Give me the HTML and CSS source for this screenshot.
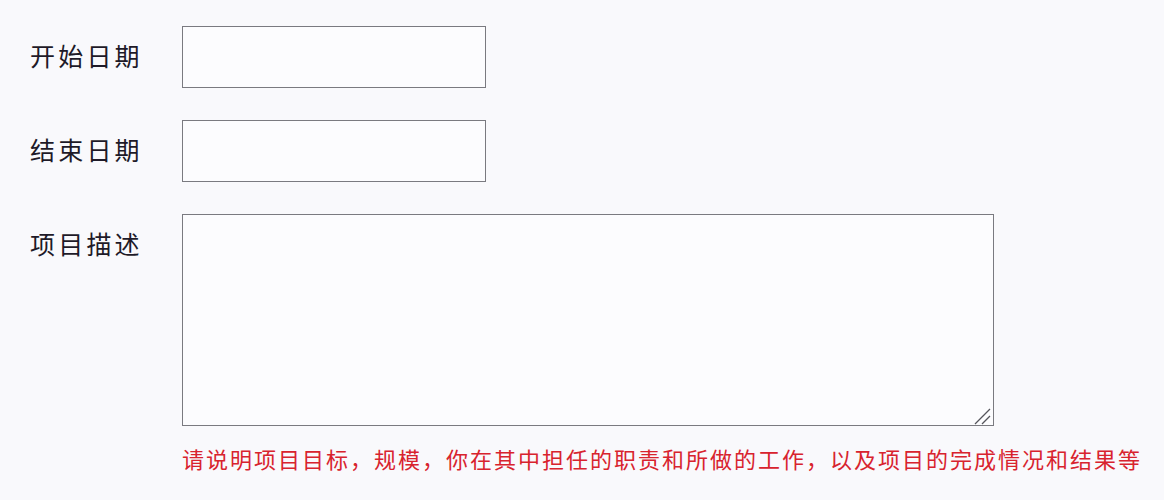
FILE: index.html
```html
<!DOCTYPE html>
<html lang="zh-CN">
<head>
    <meta charset="UTF-8">
    <title>项目经历</title>
    <link rel="stylesheet" href="styles.css">
</head>
<body>
    <form class="project-form">
        <div class="form-row">
            <label class="form-label" for="start">开始日期</label>
            <input class="form-input" type="text" id="start">
        </div>
        <div class="form-row">
            <label class="form-label" for="end">结束日期</label>
            <input class="form-input" type="text" id="end">
        </div>
        <div class="form-row">
            <label class="form-label" for="desc">项目描述</label>
            <div class="form-field">
                <div class="textarea-wrap">
                    <textarea class="form-textarea" id="desc"></textarea>
                    <!-- resize grip -->
                    <svg class="resize-grip" width="17" height="17" viewBox="0 0 17 17">
                        <path d="M1 16 L16 1 M8 16 L16 8" stroke="#55555c" stroke-width="1.3" fill="none"/>
                    </svg>
                </div>
                <div class="form-hint">请说明项目目标，规模，你在其中担任的职责和所做的工作，以及项目的完成情况和结果等</div>
            </div>
        </div>
    </form>
</body>
</html>
```

FILE: styles.css
```css
body {
    margin: 0;
    background-color: #f9f9fc;
    font-family: "Noto Sans CJK SC", "Noto Sans", sans-serif;
    color: #1e1a28;
}
.project-form {
    display: flex;
    flex-direction: column;
    gap: 32px;
    padding: 26px 0 0 30px;
}
.form-row {
    display: flex;
    align-items: flex-start;
}
.form-label {
    width: 152px;
    flex-shrink: 0;
    font-size: 25px;
    letter-spacing: 3.2px;
    line-height: 58px;
}
.form-input {
    box-sizing: border-box;
    width: 304px;
    height: 62px;
    margin: 0;
    border: 1px solid #7a7a80;
    background-color: #fcfcfe;
    outline: none;
}
.form-field {
    display: flex;
    flex-direction: column;
    align-items: flex-start;
}
.textarea-wrap {
    position: relative;
    display: flex;
}
.form-textarea {
    box-sizing: border-box;
    width: 812px;
    height: 212px;
    margin: 0;
    border: 1px solid #7a7a80;
    background-color: #fcfcfe;
    resize: none;
    outline: none;
}
.resize-grip {
    position: absolute;
    right: 3px;
    bottom: 1px;
}
.form-hint {
    margin-top: 17px;
    font-size: 22px;
    letter-spacing: 2px;
    line-height: 30px;
    color: #d8232e;
    white-space: nowrap;
}
```
